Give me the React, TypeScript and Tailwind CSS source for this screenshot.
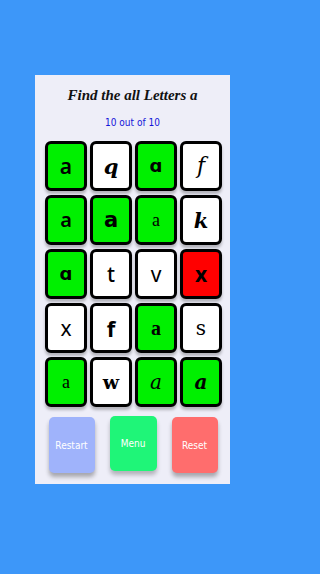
import React from "react";

type Tile = { ch: string; bg: "g" | "w" | "r"; cls: string };

const tiles: Tile[] = [
  { ch: "a", bg: "g", cls: "font-['Noto_Sans'] font-semibold text-[21px]" },
  { ch: "q", bg: "w", cls: "font-['DejaVu_Serif'] italic font-bold text-[21px]" },
  { ch: "ɑ", bg: "g", cls: "font-['DejaVu_Sans'] font-bold text-[18px]" },
  { ch: "f", bg: "w", cls: "font-['DejaVu_Serif'] italic text-[22px]" },

  { ch: "a", bg: "g", cls: "font-['Noto_Sans'] font-semibold text-[20px]" },
  { ch: "a", bg: "g", cls: "font-['DejaVu_Sans'] font-bold text-[21px]" },
  { ch: "a", bg: "g", cls: "font-['Liberation_Serif'] text-[18px]" },
  { ch: "k", bg: "w", cls: "font-['DejaVu_Serif'] italic font-bold text-[21px]" },

  { ch: "ɑ", bg: "g", cls: "font-['DejaVu_Sans'] font-bold text-[18px]" },
  { ch: "t", bg: "w", cls: "font-['Noto_Sans'] font-medium text-[21px]" },
  { ch: "v", bg: "w", cls: "font-['Noto_Sans'] text-[21px]" },
  { ch: "x", bg: "r", cls: "font-['Noto_Sans'] font-bold text-[21px]" },

  { ch: "x", bg: "w", cls: "font-['Noto_Sans'] text-[21px]" },
  { ch: "f", bg: "w", cls: "font-['Noto_Sans'] font-bold text-[22px]" },
  { ch: "a", bg: "g", cls: "font-['Liberation_Serif'] font-bold text-[20px]" },
  { ch: "s", bg: "w", cls: "font-['DejaVu_Serif'] text-[20px]" },

  { ch: "a", bg: "g", cls: "font-['Liberation_Serif'] text-[18px] text-[#1a7a1a]" },
  { ch: "w", bg: "w", cls: "font-['DejaVu_Serif'] font-bold text-[19px]" },
  { ch: "a", bg: "g", cls: "font-['DejaVu_Serif'] italic text-[20px]" },
  { ch: "a", bg: "g", cls: "font-['DejaVu_Serif'] italic font-bold text-[20px]" },
];

const bgMap = { g: "bg-[#00f000]", w: "bg-white", r: "bg-[#ff0000]" };

export default function App() {
  return (
    <div className="w-full min-w-[265px] min-h-[574px] bg-[#3d97f9]">
      <div className="w-[265px] h-[574px] pt-[75px]">
        <div className="mx-auto w-[195px] h-[409px] bg-[#eeeef8] flex flex-col items-center">
          <div className="mt-[9px] h-[22px] flex items-center text-[15px] font-bold italic font-['Liberation_Serif'] text-[#111]">
            Find the all Letters a
          </div>
          <div className="mt-[10px] h-[12px] flex items-center text-[10px] font-['DejaVu_Sans_Condensed','DejaVu_Sans',sans-serif] text-[#1414d8]">
            10 out of 10
          </div>
          <div className="mt-[13px] grid grid-cols-[repeat(4,42px)] gap-x-[3px] gap-y-[4px] ml-[2px]">
            {tiles.map((t, i) => (
              <div
                key={i}
                className={`h-[50px] rounded-[6px] border-[3px] border-black flex items-center justify-center text-black shadow-[0_3px_3px_rgba(0,0,0,0.25)] ${bgMap[t.bg]} ${t.cls}`}
              >
                <span className="leading-none">{t.ch}</span>
              </div>
            ))}
          </div>
          <div className="mt-[10px] flex gap-[15px] ml-[1px]">
            <div className="w-[46px] h-[56px] rounded-[5px] bg-[#9fb3fb] flex items-center justify-center text-white text-[10px] font-['DejaVu_Sans_Condensed','DejaVu_Sans',sans-serif] shadow-[0_4px_4px_rgba(0,0,0,0.3)]">
              Restart
            </div>
            <div className="w-[47px] h-[55px] rounded-[5px] bg-[#1ff578] flex items-center justify-center text-white text-[10px] font-['DejaVu_Sans_Condensed','DejaVu_Sans',sans-serif] shadow-[0_4px_4px_rgba(0,0,0,0.25)] -mt-[1px]">
              Menu
            </div>
            <div className="w-[46px] h-[56px] rounded-[5px] bg-[#ff6d6d] flex items-center justify-center text-white text-[10px] font-['DejaVu_Sans_Condensed','DejaVu_Sans',sans-serif] shadow-[0_4px_4px_rgba(0,0,0,0.3)]">
              Reset
            </div>
          </div>
        </div>
      </div>
    </div>
  );
}
